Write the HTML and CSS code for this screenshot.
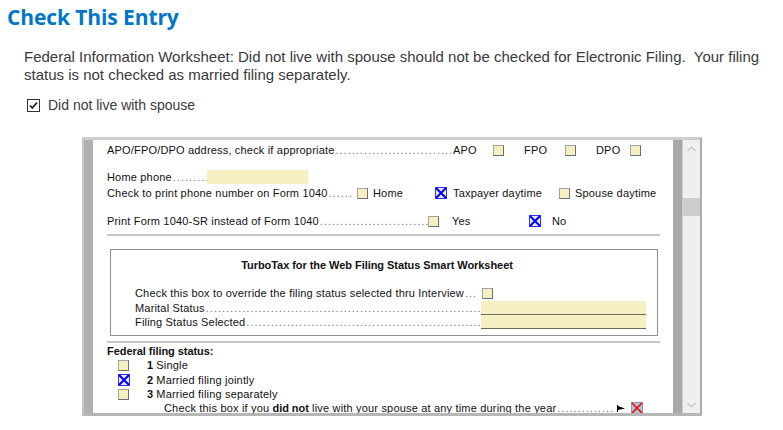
FILE: index.html
```html
<!DOCTYPE html>
<html>
<head>
<meta charset="utf-8">
<link rel="stylesheet" href="styles.css">
</head>
<body>
<h1 class="title">Check This Entry</h1>
<p class="msg">Federal Information Worksheet: Did not live with spouse should not be checked for Electronic Filing.&nbsp; Your filing status is not checked as married filing separately.</p>
<div class="confirm">
  <span class="chk"><svg width="11" height="11" viewBox="0 0 11 11"><path d="M2 5.5 L4.3 8 L9 2.5" fill="none" stroke="#222" stroke-width="1.8"/></svg></span>
  <span>Did not live with spouse</span>
</div>

<div class="frame">
  <div class="band band-l"></div>
  <div class="form">
    <div class="row r1">
      <span class="lead w346"><span>APO/FPO/DPO address, check if appropriate</span><span class="dots"></span></span>
      <span class="opt w40">APO</span><span class="cb"></span>
      <span class="opt ml20 w41">FPO</span><span class="cb"></span>
      <span class="opt ml20 w34">DPO</span><span class="cb"></span>
    </div>
    <div class="row r2">
      <span class="lead w100"><span>Home phone</span><span class="dots"></span></span>
      <span class="field w101"></span>
    </div>
    <div class="row r3">
      <span class="lead w245"><span>Check to print phone number on Form 1040</span><span class="dots"></span></span>
      <span class="cb ml5"></span><span class="opt ml5 w62">Home</span>
      <span class="cbx"><svg width="12" height="12" viewBox="0 0 12 12"><rect x="0.5" y="0.5" width="11" height="11" fill="#ece9f2" stroke="#3030ff"/><path d="M1 1 L11 11 M11 1 L1 11" stroke="#0000ff" stroke-width="2"/></svg></span><span class="opt ml6 w106">Taxpayer daytime</span>
      <span class="cb"></span><span class="opt ml5">Spouse daytime</span>
    </div>
    <div class="row r4">
      <span class="lead w321"><span>Print Form 1040-SR instead of Form 1040</span><span class="dots"></span></span>
      <span class="cb"></span><span class="opt ml13 w77">Yes</span>
      <span class="cbx"><svg width="12" height="12" viewBox="0 0 12 12"><rect x="0.5" y="0.5" width="11" height="11" fill="#ece9f2" stroke="#3030ff"/><path d="M1 1 L11 11 M11 1 L1 11" stroke="#0000ff" stroke-width="2"/></svg></span><span class="opt ml11">No</span>
    </div>
    <div class="sep sep1"></div>
    <div class="smart">
      <div class="smart-title">TurboTax for the Web Filing Status Smart Worksheet</div>
      <div class="row s1">
        <span class="lead w340"><span>Check this box to override the filing status selected thru Interview</span><span class="dots"></span></span>
        <span class="cb ml7"></span>
      </div>
      <div class="row s2">
        <span class="lead w346"><span>Marital Status</span><span class="dots"></span></span>
        <span class="field line w165"></span>
      </div>
      <div class="row s3">
        <span class="lead w346"><span>Filing Status Selected</span><span class="dots"></span></span>
        <span class="field line w165"></span>
      </div>
    </div>
    <div class="sep sep2"></div>
    <div class="row f0"><b>Federal filing status:</b></div>
    <div class="row f1"><span class="cb ml11"></span><span class="num"><b>1</b> Single</span></div>
    <div class="row f2"><span class="cbx ml11"><svg width="12" height="12" viewBox="0 0 12 12"><rect x="0.5" y="0.5" width="11" height="11" fill="#ece9f2" stroke="#3030ff"/><path d="M1 1 L11 11 M11 1 L1 11" stroke="#0000ff" stroke-width="2"/></svg></span><span class="num n2"><b>2</b> Married filing jointly</span></div>
    <div class="row f3"><span class="cb ml11"></span><span class="num"><b>3</b> Married filing separately</span></div>
    <div class="row f4">
      <span class="lead w450 ml57"><span>Check this box if you <b>did not</b> live with your spouse at any time during the year</span><span class="dots"></span></span>
      <span class="flag"><svg width="8" height="7" viewBox="0 0 8 7"><path d="M0.5 0 V7" stroke="#000" stroke-width="1"/><path d="M1 1 L8 3.5 L1 5 Z" fill="#000"/></svg></span>
      <span class="cbx red"><svg width="12" height="12" viewBox="0 0 12 12"><rect x="0.5" y="0.5" width="11" height="11" fill="#a9c6dd" stroke="#8a9aa8"/><path d="M1 1 L11 11 M11 1 L1 11" stroke="#ff0000" stroke-width="1.6"/></svg></span>
    </div>
  </div>
  <div class="band band-r"></div>
  <div class="scroll">
    <svg class="arrow up" width="9" height="6" viewBox="0 0 9 6"><path d="M0.5 5 L4.5 1 L8.5 5" fill="none" stroke="#a6a6a6" stroke-width="1"/></svg>
    <div class="thumb"></div>
    <svg class="arrow down" width="9" height="6" viewBox="0 0 9 6"><path d="M0.5 1 L4.5 5 L8.5 1" fill="none" stroke="#a6a6a6" stroke-width="1"/></svg>
  </div>
</div>
</body>
</html>
```

FILE: styles.css
```css
html, body {
  margin: 0;
  padding: 0;
  background: #fff;
}
body {
  font-family: "Liberation Sans", Arial, sans-serif;
  width: 783px;
  height: 430px;
  overflow: hidden;
}
.title {
  margin: 0;
  padding: 2px 0 0 7px;
  height: 30px;
  line-height: 30px;
  font-family: "Open Sans", "Liberation Sans", sans-serif;
  font-weight: 700;
  font-size: 21px;
  color: #0077c5;
  letter-spacing: -0.1px;
}
.msg {
  margin: 16px 0 0 24px;
  width: 745px;
  font-size: 15px;
  line-height: 18px;
  color: #393a3d;
}
.confirm {
  margin: 11px 0 0 27px;
  height: 20px;
  display: flex;
  align-items: center;
  font-size: 14px;
  color: #393a3d;
}
.chk {
  width: 13px;
  height: 13px;
  box-sizing: border-box;
  border: 1px solid #333;
  background: #fff;
  display: flex;
  align-items: center;
  justify-content: center;
  margin-right: 8px;
}

/* frame */
.frame {
  margin: 22px 0 0 82px;
  width: 620px;
  height: 279px;
  box-sizing: border-box;
  border: 2px solid #c6c6c6;
  border-top: 3px solid #cdcdcd;
  border-bottom: 3px solid #b6b6b6;
  border-right-color: #adadad;
  display: flex;
}
.band { flex: none; background: #adadad; }
.band-l { width: 9px; background: #b0b0b0; }
.band-r { width: 10px; background: #a9a9a9; border-right: 1px solid #cfcfcf; box-sizing: border-box; }
.scroll {
  width: 17px;
  flex: none;
  background: #efefef;
  position: relative;
}
.thumb {
  margin-top: 58px;
  height: 18px;
  background: #cdcdcd;
}
.arrow { position: absolute; left: 4px; }
.arrow.up { top: 6px; }
.arrow.down { bottom: 5px; }

.form {
  width: 580px;
  flex: none;
  background: #fff;
  overflow: hidden;
  padding-left: 14px;
  box-sizing: border-box;
  font-size: 11px;
  letter-spacing: 0.18px;
  color: #111;
}
.form b, .smart-title { letter-spacing: -0.05px; }
.row {
  height: 14px;
  line-height: 14px;
  display: flex;
  align-items: center;
  white-space: nowrap;
}
.lead {
  display: flex;
  flex: none;
  overflow: hidden;
}
.lead > span:first-child { flex: none; }
.dots {
  flex: 1;
  overflow: hidden;
  color: #6d6d8a;
  letter-spacing: 1px;
  padding-left: 1px;
}
.dots::after {
  content: "....................................................................................................................................................................................";
}
.opt { flex: none; }
.cb {
  flex: none;
  width: 11px;
  height: 11px;
  box-sizing: border-box;
  background: #f5efc1;
  border: 1px solid #a3a3a3;
  border-right-color: #6e6e6e;
  border-bottom-color: #6e6e6e;
}
.cbx { flex: none; width: 12px; height: 12px; display: flex; }
.field {
  flex: none;
  height: 14px;
  background: #f5efc1;
}
.field.line { box-sizing: border-box; border-bottom: 1px solid #6b6b5a; }

.w34 { width: 34px; }
.w40 { width: 40px; }
.w41 { width: 41px; }
.w62 { width: 62px; }
.w77 { width: 77px; }
.w100 { width: 100px; }
.w101 { width: 101px; }
.w106 { width: 106px; }
.w165 { width: 165px; }
.w245 { width: 245px; }
.w321 { width: 321px; }
.w340 { width: 340px; }
.w346 { width: 346px; }
.w450 { width: 450px; }
.ml5 { margin-left: 5px; }
.ml6 { margin-left: 6px; }
.ml7 { margin-left: 7px; }
.ml11 { margin-left: 11px; }
.ml13 { margin-left: 13px; }
.ml20 { margin-left: 20px; }
.ml57 { margin-left: 57px; }

.r1 { margin-top: 3px; }
.r2 { margin-top: 13px; }
.r3 { margin-top: 2px; }
.r4 { margin-top: 14px; }
.sep {
  height: 2px;
  background: #c6c6c6;
  margin-right: 13px;
}
.sep1 { margin-top: 6px; }
.smart {
  margin: 13px 15px 0 3px;
  height: 87px;
  box-sizing: border-box;
  border: 1px solid #8e8e8e;
  padding-left: 24px;
}
.smart-title {
  margin-top: 8px;
  height: 14px;
  line-height: 14px;
  font-weight: 700;
  text-align: center;
  padding-right: 38px;
}
.s1 { margin-top: 14px; }
.s2 { margin-top: 0; height: 15px; }
.s3 { margin-top: 0; height: 14px; }
.sep2 { margin-top: 5px; }
.f0 { margin-top: 1px; }
.f1 { margin-top: 0; }
.f2 { margin-top: 1px; }
.f3 { margin-top: 0; }
.f4 { margin-top: 0; }
.num { margin-left: 18px; }
.n2 { margin-left: 17px; }
.flag { flex: none; margin-left: 3px; width: 8px; display: flex; }
.cbx.red { margin-left: 6px; }
```
